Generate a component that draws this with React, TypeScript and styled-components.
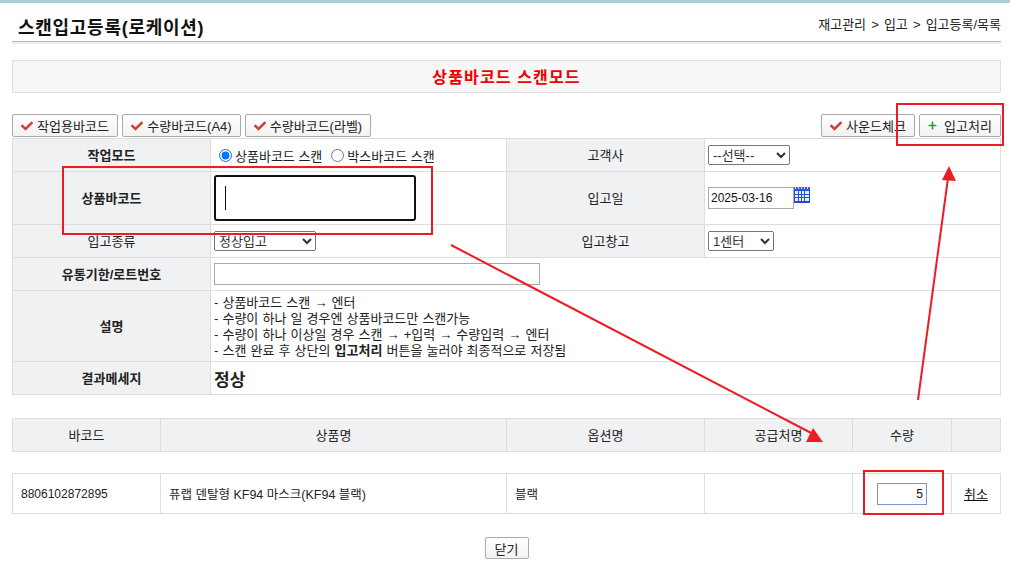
import React, { FC } from "react";
import styled, { createGlobalStyle } from "styled-components";
import { FaCheck, FaPlus } from "react-icons/fa";

const FONT = `"Liberation Sans", "Noto Sans CJK KR", sans-serif`;

const GlobalStyle = createGlobalStyle`
  html, body { margin: 0; padding: 0; background: #fff; }
  body { font-family: ${FONT}; font-size: 13px; color: #222; }
`;

type BarProps = { label: string; icon?: "check" | "plus"; width: number };

const ToolButton: FC<BarProps> = ({ label, icon = "check", width }) => (
  <Button $w={width}>
    {icon === "check" ? <CheckIcon /> : <PlusIcon />}
    {label}
  </Button>
);

const App: FC = () => (
  <Page>
    <GlobalStyle />
    <TopStrip />
    <Content>
      <TitleBar>
        <Title>스캔입고등록(로케이션)</Title>
        <Crumbs>재고관리 &gt; 입고 &gt; 입고등록/목록</Crumbs>
      </TitleBar>
      <Banner>상품바코드 스캔모드</Banner>
      <Toolbar>
        <ButtonGroup>
          <ToolButton label="작업용바코드" width={106} />
          <ToolButton label="수량바코드(A4)" width={119} />
          <ToolButton label="수량바코드(라벨)" width={126} />
        </ButtonGroup>
        <ButtonGroup>
          <ToolButton label="사운드체크" width={94} />
          <ToolButton label="입고처리" icon="plus" width={82} />
        </ButtonGroup>
      </Toolbar>

      <Grid>
        <colgroup>
          <col width={198} />
          <col width={296} />
          <col width={198} />
          <col />
        </colgroup>
        <tbody>
          <Row $h={33}>
            <Head $strong>작업모드</Head>
            <Cell>
              <RadioLabel>
                <Radio type="radio" name="mode" defaultChecked />
                상품바코드 스캔
              </RadioLabel>
              <RadioLabel>
                <Radio type="radio" name="mode" />
                박스바코드 스캔
              </RadioLabel>
            </Cell>
            <Head>고객사</Head>
            <Cell>
              <Select $w={82} defaultValue="">
                <option value="">--선택--</option>
              </Select>
            </Cell>
          </Row>
          <Row $h={53}>
            <Head $strong>상품바코드</Head>
            <Cell>
              <ScanWrap>
                <ScanInput type="text" />
                <Caret />
              </ScanWrap>
            </Cell>
            <Head>입고일</Head>
            <Cell>
              <DateWrap>
                <TextInput $w={86} type="text" defaultValue="2025-03-16" />
                <svg width="16" height="16" viewBox="0 0 16 16">
                  <rect x="0" y="0" width="16" height="16" fill="#1f4fd0" />
                  <rect x="0" y="0" width="16" height="3" fill="#3f62b4" />
                  <path d="M1 0h1v2H1zM4 0h1v2H4zM7 0h1v2H7zM10 0h1v2h-1zM13 0h1v2h-1z" fill="#cfd9f2" />
                  <path
                    d="M1 4h3v3H1zM5 4h2v3H5zM8 4h2v3H8zM11 4h4v3h-4zM1 8h3v2H1zM5 8h2v2H5zM8 8h2v2H8zM11 8h4v2h-4zM1 11h3v3H1zM5 11h2v3H5zM8 11h2v3H8zM11 11h4v3h-4z"
                    fill="#e6edfc"
                  />
                </svg>
              </DateWrap>
            </Cell>
          </Row>
          <Row $h={33}>
            <Head>입고종류</Head>
            <Cell>
              <Select $w={102} defaultValue="normal">
                <option value="normal">정상입고</option>
              </Select>
            </Cell>
            <Head>입고창고</Head>
            <Cell>
              <Select $w={66} defaultValue="1">
                <option value="1">1센터</option>
              </Select>
            </Cell>
          </Row>
          <Row $h={33}>
            <Head $strong>유통기한/로트번호</Head>
            <Cell colSpan={3}>
              <TextInput $w={326} type="text" />
            </Cell>
          </Row>
          <Row $h={71}>
            <Head $strong>설명</Head>
            <Cell colSpan={3}>
              <Notes>
                <li>- 상품바코드 스캔 → 엔터</li>
                <li>- 수량이 하나 일 경우엔 상품바코드만 스캔가능</li>
                <li>- 수량이 하나 이상일 경우 스캔 → +입력 → 수량입력 → 엔터</li>
                <li>
                  - 스캔 완료 후 상단의 <b>입고처리</b> 버튼을 눌러야 최종적으로 저장됨
                </li>
              </Notes>
            </Cell>
          </Row>
          <Row $h={33}>
            <Head $strong>결과메세지</Head>
            <Cell colSpan={3}>
              <Result>정상</Result>
            </Cell>
          </Row>
        </tbody>
      </Grid>

      <ListHead>
        <ListCols />
        <tbody>
          <Row $h={33}>
            <Head>바코드</Head>
            <Head>상품명</Head>
            <Head>옵션명</Head>
            <Head>공급처명</Head>
            <Head>수량</Head>
            <Head />
          </Row>
        </tbody>
      </ListHead>

      <ListBody>
        <ListCols />
        <tbody>
          <Row $h={40}>
            <BarcodeCell>8806102872895</BarcodeCell>
            <ItemCell>퓨랩 덴탈형 KF94 마스크(KF94 블랙)</ItemCell>
            <ItemCell>블랙</ItemCell>
            <ItemCell />
            <QtyCell>
              <QtyInput type="text" defaultValue="5" />
            </QtyCell>
            <QtyCell>
              <CancelLink href="#">취소</CancelLink>
            </QtyCell>
          </Row>
        </tbody>
      </ListBody>

      <Footer>
        <CloseButton>닫기</CloseButton>
      </Footer>
    </Content>

    <Annotations width="1010" height="568" viewBox="0 0 1010 568">
      <g fill="none" stroke="#ed1c24" strokeWidth="2">
        <rect x="63" y="167" width="369" height="67" />
        <rect x="897" y="104" width="106" height="41" />
        <rect x="864" y="471" width="79" height="43" />
        <line x1="451" y1="245" x2="815" y2="435" />
        <line x1="918" y1="400" x2="948" y2="178" />
      </g>
      <g fill="#ed1c24">
        <polygon points="813,428 823,442 806,442" />
        <polygon points="949,166 956,181 942,180" />
      </g>
    </Annotations>
  </Page>
);

export default App;

const ListCols: FC = () => (
  <colgroup>
    <col width={148} />
    <col width={346} />
    <col width={198} />
    <col width={148} />
    <col width={99} />
    <col />
  </colgroup>
);

const Page = styled.div`
  position: relative;
  width: 1010px;
  height: 568px;
  overflow: hidden;
`;

const TopStrip = styled.div`
  height: 3px;
  background: #a6d2d8;
`;

const Content = styled.div`
  width: 989px;
  margin-left: 12px;
`;

const TitleBar = styled.div`
  display: flex;
  justify-content: space-between;
  align-items: center;
  box-sizing: border-box;
  height: 39px;
  padding: 8px 0 0 6px;
  border-bottom: 1px solid #bbb;
  box-shadow: 0 2px 0 #eee;
`;

const Title = styled.h1`
  margin: 0;
  font-size: 18px;
  font-weight: 700;
  letter-spacing: 0.72px;
  color: #111;
`;

const Crumbs = styled.div`
  font-size: 13px;
  word-spacing: 1.5px;
  color: #222;
  margin-bottom: 5px;
`;

const Banner = styled.div`
  box-sizing: border-box;
  height: 33px;
  margin-top: 18px;
  line-height: 33px;
  text-align: center;
  font-size: 16px;
  font-weight: 700;
  letter-spacing: 1.15px;
  color: #f00000;
  background: #f7f7f7;
  border: 1px solid #e0e0e0;
`;

const Toolbar = styled.div`
  display: flex;
  justify-content: space-between;
  margin-top: 21px;
  margin-bottom: 1px;
`;

const ButtonGroup = styled.div`
  display: flex;
  gap: 4px;
`;

const Button = styled.button<{ $w: number }>`
  display: flex;
  align-items: center;
  justify-content: center;
  gap: 4px;
  box-sizing: border-box;
  width: ${(p) => p.$w}px;
  height: 23px;
  padding: 0;
  font-family: ${FONT};
  font-size: 13px;
  color: #222;
  background: linear-gradient(#fff, #f2f2f2);
  border: 1px solid #aaa;
  border-radius: 2px;
`;

const CheckIcon = styled(FaCheck)`
  width: 12px;
  height: 12px;
  color: #d6392e;
`;

const PlusIcon = styled(FaPlus)`
  width: 9px;
  height: 9px;
  margin-right: 3px;
  color: #27a527;
`;

const Grid = styled.table`
  width: 989px;
  table-layout: fixed;
  border-collapse: collapse;
`;

const Row = styled.tr<{ $h: number }>`
  height: ${(p) => p.$h}px;
`;

const Head = styled.th<{ $strong?: boolean }>`
  padding: 0 0 2px;
  font-size: 13px;
  font-weight: ${(p) => (p.$strong ? 700 : 400)};
  color: #222;
  background: #f0f1f3;
  border: 1px solid #ddd;
`;

const Cell = styled.td`
  padding: 0 3px;
  border: 1px solid #ddd;
`;

const RadioLabel = styled.label`
  display: inline-flex;
  align-items: center;
  margin: 0 4px 0 0;
  font-size: 13px;
`;

const Radio = styled.input`
  margin: 0 3px 0 5px;
`;

const Select = styled.select<{ $w: number }>`
  width: ${(p) => p.$w}px;
  height: 20px;
  font-family: ${FONT};
  font-size: 13px;
  color: #333;
`;

const ScanWrap = styled.div`
  position: relative;
  width: 202px;
  height: 46px;
`;

const ScanInput = styled.input`
  box-sizing: border-box;
  display: block;
  width: 100%;
  height: 100%;
  border: 2px solid #111;
  border-radius: 3px;
  outline: none;
`;

const Caret = styled.span`
  position: absolute;
  left: 11px;
  top: 11px;
  width: 1px;
  height: 24px;
  background: #111;
`;

const DateWrap = styled.div`
  display: flex;
  align-items: flex-start;
`;

const TextInput = styled.input<{ $w: number }>`
  box-sizing: border-box;
  width: ${(p) => p.$w}px;
  height: 22px;
  padding: 0 2px;
  font-family: ${FONT};
  font-size: 12px;
  color: #111;
  border: 1px solid #aaa;
  outline: none;
`;

const Notes = styled.ul`
  margin: 0;
  padding: 2px 0 0;
  list-style: none;
  font-size: 13px;
  line-height: 16px;
  word-spacing: 0.5px;
  color: #222;
`;

const Result = styled.span`
  font-size: 17px;
  font-weight: 700;
  color: #222;
`;

const ListHead = styled(Grid)`
  margin-top: 23px;
`;

const ListBody = styled(Grid)`
  margin-top: 21px;
`;

const ItemCell = styled.td`
  padding: 0 8px;
  font-size: 12.5px;
  color: #222;
  border: 1px solid #ddd;
`;

const BarcodeCell = styled(ItemCell)`
  font-size: 12px;
`;

const QtyCell = styled.td`
  padding: 0;
  text-align: center;
  border: 1px solid #ddd;
`;

const QtyInput = styled.input`
  box-sizing: border-box;
  width: 50px;
  height: 22px;
  padding: 0 3px;
  font-family: ${FONT};
  font-size: 12px;
  text-align: right;
  color: #111;
  border: 1px solid #7f93c8;
  outline: none;
`;

const CancelLink = styled.a`
  font-size: 13px;
  color: #111;
  text-decoration: underline;
`;

const Footer = styled.div`
  display: flex;
  justify-content: center;
  margin-top: 23px;
`;

const CloseButton = styled.button`
  box-sizing: border-box;
  width: 44px;
  height: 22px;
  padding: 0;
  font-family: ${FONT};
  font-size: 13px;
  color: #222;
  background: linear-gradient(#fff, #f2f2f2);
  border: 1px solid #aaa;
  border-radius: 2px;
`;

const Annotations = styled.svg`
  position: absolute;
  left: 0;
  top: 0;
  pointer-events: none;
`;
